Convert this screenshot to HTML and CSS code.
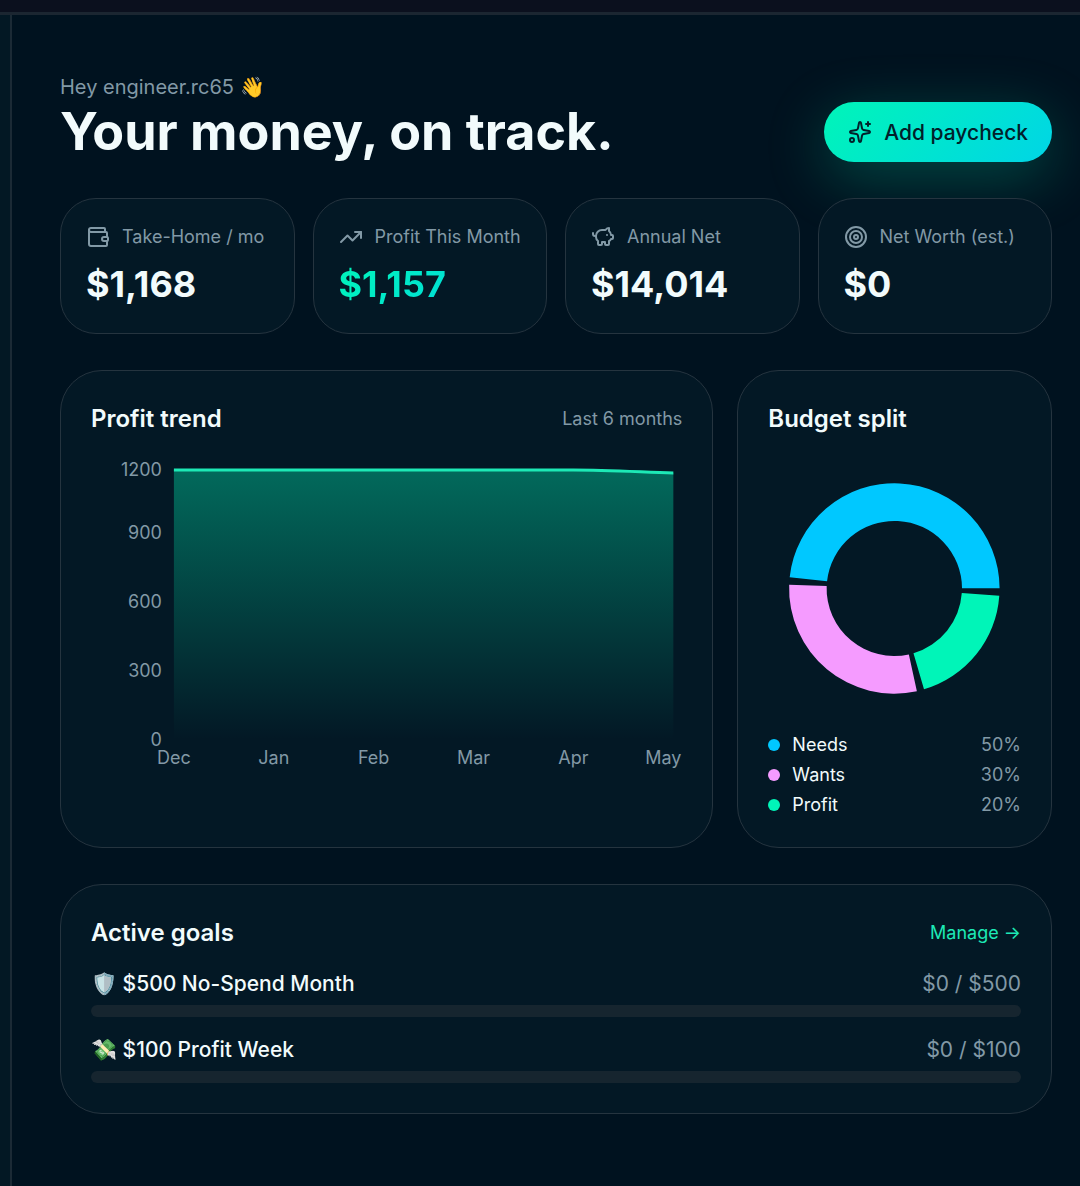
FILE: index.html
```html
<!DOCTYPE html>
<html lang="en">
  <head>
    <meta charset="UTF-8" />
    <meta name="viewport" content="width=device-width, initial-scale=1.0" />
    <title>Dashboard</title>
    <link rel="stylesheet" href="styles.css">
  </head>
  <body>
    <header class="topbar"></header>

    <div class="layout">
      <aside class="sidebar"></aside>

      <main class="content">
        <!-- Greeting -->
        <section class="hero">
          <div>
            <p class="greeting">Hey engineer.rc65 👋</p>
            <h1>Your money, on track.</h1>
          </div>
          <button class="add-button" type="button">
            <svg class="icon" viewBox="0 0 24 24">
              <path d="M11.017 2.814a1 1 0 0 1 1.966 0l1.051 5.558a2 2 0 0 0 1.594 1.594l5.558 1.051a1 1 0 0 1 0 1.966l-5.558 1.051a2 2 0 0 0-1.594 1.594l-1.051 5.558a1 1 0 0 1-1.966 0l-1.051-5.558a2 2 0 0 0-1.594-1.594l-5.558-1.051a1 1 0 0 1 0-1.966l5.558-1.051a2 2 0 0 0 1.594-1.594z"/>
              <path d="M20 2v4"/>
              <path d="M22 4h-4"/>
              <circle cx="4" cy="20" r="2"/>
            </svg>
            <span>Add paycheck</span>
          </button>
        </section>

        <!-- Stats -->
        <section class="stats">
          <div class="card stat">
            <div class="stat-label">
              <svg class="icon" viewBox="0 0 24 24">
                <path d="M19 7V4a1 1 0 0 0-1-1H5a2 2 0 0 0 0 4h15a1 1 0 0 1 1 1v4h-3a2 2 0 0 0 0 4h3a1 1 0 0 0 1-1v-2a1 1 0 0 0-1-1"/>
                <path d="M3 5v14a2 2 0 0 0 2 2h15a1 1 0 0 0 1-1v-4"/>
              </svg>
              <span>Take-Home / mo</span>
            </div>
            <p class="stat-value">$1,168</p>
          </div>
          <div class="card stat">
            <div class="stat-label">
              <svg class="icon" viewBox="0 0 24 24">
                <path d="M16 7h6v6"/>
                <path d="m22 7-8.5 8.5-5-5L2 17"/>
              </svg>
              <span>Profit This Month</span>
            </div>
            <p class="stat-value accent">$1,157</p>
          </div>
          <div class="card stat">
            <div class="stat-label">
              <svg class="icon" viewBox="0 0 24 24">
                <path d="M11 17h3v2a1 1 0 0 0 1 1h2a1 1 0 0 0 1-1v-3a3.16 3.16 0 0 0 2-2h1a1 1 0 0 0 1-1v-2a1 1 0 0 0-1-1h-1a5 5 0 0 0-2-4V3a4 4 0 0 0-3.2 1.6l-.3.4H11a6 6 0 0 0-6 6v1a5 5 0 0 0 2 4v3a1 1 0 0 0 1 1h2a1 1 0 0 0 1-1z"/>
                <path d="M16 10h.01"/>
                <path d="M2 8v1a2 2 0 0 0 2 2h1"/>
              </svg>
              <span>Annual Net</span>
            </div>
            <p class="stat-value">$14,014</p>
          </div>
          <div class="card stat">
            <div class="stat-label">
              <svg class="icon" viewBox="0 0 24 24">
                <circle cx="12" cy="12" r="10"/>
                <circle cx="12" cy="12" r="6"/>
                <circle cx="12" cy="12" r="2"/>
              </svg>
              <span>Net Worth (est.)</span>
            </div>
            <p class="stat-value">$0</p>
          </div>
        </section>

        <!-- Charts -->
        <section class="charts">
          <div class="card panel trend">
            <div class="panel-head">
              <h2>Profit trend</h2>
              <span class="muted">Last 6 months</span>
            </div>
            <svg class="trend-chart" viewBox="0 0 592 330" role="img" aria-label="Profit trend">
              <defs>
                <linearGradient id="profit-fill" x1="0" y1="0" x2="0" y2="1">
                  <stop offset="0" stop-color="#00f5b8" stop-opacity="0.37"/>
                  <stop offset="1" stop-color="#00f5b8" stop-opacity="0"/>
                </linearGradient>
              </defs>
              <path fill="url(#profit-fill)" d="M83 17H483C516 17 550 19 583 20V287H83Z"/>
              <path class="trend-line" d="M83 17H483C516 17 550 19 583 20"/>
              <g class="axis axis-y">
                <text x="71" y="23">1200</text>
                <text x="71" y="86">900</text>
                <text x="71" y="155">600</text>
                <text x="71" y="224">300</text>
                <text x="71" y="293">0</text>
              </g>
              <g class="axis axis-x">
                <text x="83" y="311">Dec</text>
                <text x="183" y="311">Jan</text>
                <text x="283" y="311">Feb</text>
                <text x="383" y="311">Mar</text>
                <text x="483" y="311">Apr</text>
                <text x="573" y="311">May</text>
              </g>
            </svg>
          </div>

          <div class="card panel">
            <div class="panel-head">
              <h2>Budget split</h2>
            </div>
            <svg class="split-chart" viewBox="-126 -135 252 270" role="img" aria-label="Budget split">
              <path fill="#00c8ff" d="M105 0A105 105 0 0 0-104.4-11L-67.1-7.1A67.5 67.5 0 0 1 67.5 0Z"/>
              <path fill="#f59bff" d="M-104.9-3.7A105 105 0 0 0 22.5 102.6L14.5 65.9A67.5 67.5 0 0 1-67.5-2.4Z"/>
              <path fill="#00f5b8" d="M29.6 100.7A105 105 0 0 0 104.7 7.3L67.3 4.7A67.5 67.5 0 0 1 19.1 64.8Z"/>
            </svg>
            <ul class="legend">
              <li><span class="dot needs"></span>Needs<span class="percent">50%</span></li>
              <li><span class="dot wants"></span>Wants<span class="percent">30%</span></li>
              <li><span class="dot profit"></span>Profit<span class="percent">20%</span></li>
            </ul>
          </div>
        </section>

        <!-- Goals -->
        <section class="card panel">
          <div class="panel-head">
            <h2>Active goals</h2>
            <a class="manage" href="#">Manage →</a>
          </div>
          <div class="goals">
            <div class="goal">
              <div class="goal-row">
                <label for="goal-no-spend">🛡️ $500 No-Spend Month</label>
                <span class="goal-amount">$0 / $500</span>
              </div>
              <progress id="goal-no-spend" value="0" max="500"></progress>
            </div>
            <div class="goal">
              <div class="goal-row">
                <label for="goal-profit-week">💸 $100 Profit Week</label>
                <span class="goal-amount">$0 / $100</span>
              </div>
              <progress id="goal-profit-week" value="0" max="100"></progress>
            </div>
          </div>
        </section>
      </main>
    </div>
  </body>
</html>
```

FILE: styles.css
```css
/* Base styles */
* {
  margin: 0;
  padding: 0;
  box-sizing: border-box;
}

body {
  display: flex;
  flex-direction: column;
  min-height: 100vh;
  font-family: Inter, "Liberation Sans", sans-serif;
  font-size: 18px;
  line-height: 24px;
  background-color: #00121f;
  color: #f2fbfc;
}

.icon {
  flex: none;
  width: 24px;
  height: 24px;
  fill: none;
  stroke: currentColor;
  stroke-width: 2;
  stroke-linecap: round;
  stroke-linejoin: round;
}

/* Layout */
.topbar {
  height: 15px;
  background-color: #0b101e;
  border-bottom: 3px solid #1b2631;
}

.layout {
  flex: 1;
  display: flex;
}

.sidebar {
  flex: none;
  width: 12px;
  background-color: #031824;
  border-right: 2px solid #1b2a35;
}

.content {
  flex: 1;
  display: flex;
  flex-direction: column;
  gap: 36px;
  padding: 57px 28px 57px 48px;
}

/* Greeting */
.hero {
  display: flex;
  justify-content: space-between;
  align-items: flex-end;
}

.greeting {
  font-size: 20px;
  line-height: 30px;
  color: #8299a6;
}

h1 {
  font-size: 52px;
  line-height: 60px;
  font-weight: 700;
}

.add-button {
  display: inline-flex;
  align-items: center;
  gap: 12px;
  height: 60px;
  padding: 0 24px;
  border: none;
  border-radius: 30px;
  background: linear-gradient(135deg, #00f5b8, #00d5e6);
  box-shadow: 0 15px 60px rgba(0, 245, 184, 0.25);
  color: #02202a;
  font-family: inherit;
  font-size: 21px;
  font-weight: 500;
  cursor: pointer;
}

/* Cards */
.card {
  background-color: #031825;
  border: 1px solid #25343f;
}

.stats {
  display: grid;
  grid-template-columns: repeat(4, 1fr);
  gap: 18px;
}

.stat {
  display: flex;
  flex-direction: column;
  gap: 10px;
  padding: 25px;
  border-radius: 36px;
}

.stat-label {
  display: flex;
  align-items: center;
  gap: 12px;
  line-height: 26px;
  color: #8299a6;
  white-space: nowrap;
}

.stat-value {
  font-size: 36px;
  line-height: 48px;
  font-weight: 700;
}

.accent {
  background: linear-gradient(135deg, #00f5b8, #00d5e6);
  -webkit-background-clip: text;
  background-clip: text;
  color: transparent;
}

/* Panels */
.panel {
  padding: 30px;
  border-radius: 42px;
}

.panel-head {
  display: flex;
  justify-content: space-between;
  align-items: center;
}

h2 {
  font-size: 24px;
  line-height: 36px;
  font-weight: 600;
}

.muted {
  color: #8299a6;
}

.charts {
  display: grid;
  grid-template-columns: repeat(3, 1fr);
  gap: 24px;
}

.trend {
  grid-column: span 2;
}

.trend-chart,
.split-chart {
  display: block;
  width: 100%;
  margin-top: 16px;
}

.trend-line {
  fill: none;
  stroke: #1de9b6;
  stroke-width: 3;
}

.axis {
  fill: #8299a6;
  font-size: 18px;
}

.axis-y {
  text-anchor: end;
}

.axis-x {
  text-anchor: middle;
}

/* Legend */
.legend {
  display: flex;
  flex-direction: column;
  gap: 6px;
  margin-top: 9px;
  list-style: none;
}

.legend li {
  display: flex;
  align-items: center;
  gap: 12px;
}

.dot {
  width: 12px;
  height: 12px;
  border-radius: 50%;
}

.needs { background-color: #00c8ff; }
.wants { background-color: #f59bff; }
.profit { background-color: #00f5b8; }

.percent {
  margin-left: auto;
  color: #8299a6;
}

/* Goals */
.manage {
  color: #1de9b6;
  text-decoration: none;
}

.goals {
  display: flex;
  flex-direction: column;
  gap: 18px;
  margin-top: 18px;
}

.goal {
  display: flex;
  flex-direction: column;
  gap: 6px;
}

.goal-row {
  display: flex;
  justify-content: space-between;
  font-size: 21px;
  line-height: 30px;
}

.goal-row label {
  font-weight: 500;
}

.goal-amount {
  color: #8299a6;
}

progress {
  appearance: none;
  display: block;
  width: 100%;
  height: 12px;
  border: none;
  border-radius: 6px;
  overflow: hidden;
  background-color: #16252f;
}

progress::-webkit-progress-bar {
  background-color: #16252f;
}

progress::-webkit-progress-value {
  background-color: #00f5b8;
}
```
